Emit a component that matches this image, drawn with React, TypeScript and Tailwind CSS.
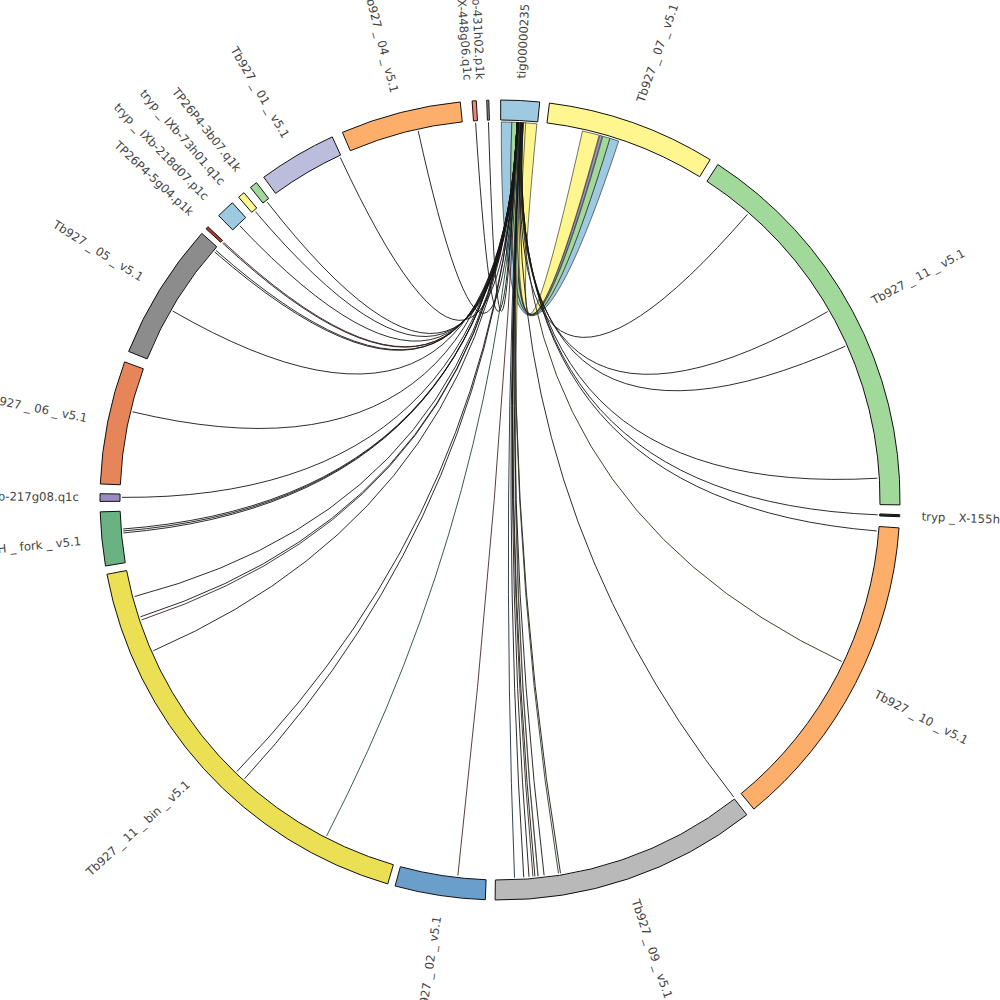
import React from 'react'

const CX = 500
const CY = 500
const R_OUT = 400
const R_IN = 380
const R_CHORD = 378

type Seg = { name: string; a0: number; a1: number; fill: string }
type Label = { text: string; a: number }

const segments: Seg[] = [
  { name: 'tig00000235', a0: 0.1, a1: 5.7, fill: '#9ecae1' },
  { name: 'Tb927_07_v5.1', a0: 7.1, a1: 31.7, fill: '#fff68f' },
  { name: 'Tb927_11_v5.1', a0: 33.0, a1: 90.7, fill: '#a1d99b' },
  { name: 'tryp_X-155h', a0: 92.1, a1: 92.4, fill: '#222222' },
  { name: 'Tb927_10_v5.1', a0: 94.0, a1: 140.6, fill: '#fdae6b' },
  { name: 'Tb927_09_v5.1', a0: 141.9, a1: 180.7, fill: '#b9b9b9' },
  { name: 'Tb927_02_v5.1', a0: 182.1, a1: 195.2, fill: '#6a9ecb' },
  { name: 'Tb927_11_bin_v5.1', a0: 196.3, a1: 259.3, fill: '#ebdf53' },
  { name: 'H_fork_v5.1', a0: 260.5, a1: 268.3, fill: '#6bb283' },
  { name: '217g08', a0: 269.8, a1: 270.9, fill: '#9b8bc4' },
  { name: 'Tb927_06_v5.1', a0: 272.3, a1: 290.2, fill: '#e6855a' },
  { name: 'Tb927_05_v5.1', a0: 291.8, a1: 311.8, fill: '#8c8c8c' },
  { name: 'TP26P4-5g04', a0: 312.7, a1: 313.1, fill: '#b23a2a' },
  { name: '218d07', a0: 315.3, a1: 318.0, fill: '#9ecae1' },
  { name: '73h01', a0: 319.2, a1: 320.2, fill: '#fff68f' },
  { name: 'TP26P4-3b07', a0: 321.4, a1: 322.5, fill: '#a1d99b' },
  { name: 'Tb927_01_v5.1', a0: 323.8, a1: 335.2, fill: '#bcbddc' },
  { name: 'Tb927_04_v5.1', a0: 336.8, a1: 354.3, fill: '#fdae6b' },
  { name: '431h02', a0: 356.0, a1: 356.6, fill: '#fb8072' },
  { name: '448g06', a0: 358.1, a1: 358.4, fill: '#999999' },
]

// right half: text reads outward from the circle
const rightLabels: Label[] = [
  { text: 'tig00000235', a: 2.9 },
  { text: 'Tb927 _ 07 _ v5.1', a: 19.4 },
  { text: 'Tb927 _ 11 _ v5.1', a: 61.9 },
  { text: 'tryp _ X-155h04.q1k', a: 92.25 },
  { text: 'Tb927 _ 10 _ v5.1', a: 117.3 },
  { text: 'Tb927 _ 09 _ v5.1', a: 161.3 },
]

// left half: text reads toward the circle
const leftLabels: Label[] = [
  { text: 'Tb927 _ 02 _ v5.1', a: 188.6 },
  { text: 'Tb927 _ 11 _ bin _ v5.1', a: 227.8 },
  { text: 'Tb927 _ VSG _ H _ fork _ v5.1', a: 264.4 },
  { text: 'tryp _ IXb-217g08.q1c', a: 270.4 },
  { text: 'Tb927 _ 06 _ v5.1', a: 281.2 },
  { text: 'Tb927 _ 05 _ v5.1', a: 301.8 },
  { text: 'TP26P4-5g04.p1k', a: 312.9 },
  { text: 'tryp _ IXb-218d07.p1c', a: 315.8 },
  { text: 'tryp _ IXb-73h01.q1c', a: 318.8 },
  { text: 'TP26P4-3b07.q1k', a: 321.6 },
  { text: 'Tb927 _ 01 _ v5.1', a: 329.5 },
  { text: 'Tb927 _ 04 _ v5.1', a: 345.5 },
  { text: 'tryp _ X-448g06.q1c', a: 355.6 },
  { text: 'tryp _ IXb-431h02.p1k', a: 357.3 },
]

const K = '#151515'

// [angle on tig00000235, angle on other segment, stroke]
const links: [number, number, string][] = [
  [3.3, 40.9, K],
  [3.35, 60.1, K],
  [3.4, 66.0, K],
  [3.45, 86.7, K],
  [3.5, 92.25, K],
  [3.5, 94.7, K],
  [3.3, 115.3, '#2a2a18'],
  [3.2, 141.8, K],
  [3.0, 170.8, K],
  [3.05, 171.1, '#2d3d22'],
  [3.1, 173.3, K],
  [3.0, 174.7, K],
  [3.1, 175.0, '#3a2a20'],
  [3.2, 175.6, K],
  [3.1, 176.4, K],
  [3.0, 177.8, '#1e2c3a'],
  [2.9, 186.4, '#4a2626'],
  [2.9, 207.3, '#244a32'],
  [2.8, 222.5, K],
  [2.8, 224.1, K],
  [2.8, 246.5, K],
  [2.8, 251.5, '#3a2424'],
  [2.8, 252.0, K],
  [2.8, 255.2, K],
  [2.7, 265.0, K],
  [2.7, 265.3, K],
  [2.7, 265.6, K],
  [2.7, 270.4, K],
  [2.7, 283.5, K],
  [2.6, 300.0, K],
  [2.6, 311.0, K],
  [2.6, 311.3, K],
  [2.6, 312.8, K],
  [2.6, 313.0, '#3a1a1a'],
  [2.6, 316.5, K],
  [2.6, 319.7, K],
  [2.6, 322.0, K],
  [2.6, 335.0, K],
  [2.6, 347.5, K],
  [2.6, 356.3, K],
  [2.6, 358.25, K],
]

// [tig start, tig end, other start, other end, fill]
const ribbons: [number, number, number, number, string][] = [
  [0.2, 1.8, 16.9, 18.3, '#9ecae1'],
  [1.8, 3.0, 15.8, 16.9, '#a1d99b'],
  [3.5, 5.6, 12.6, 15.2, '#fff68f'],
  [3.0, 3.3, 15.3, 15.7, '#9e9ac8'],
  [3.55, 3.9, 174.2, 174.25, '#fff68f'],
]

function pt(r: number, a: number) {
  const t = (a * Math.PI) / 180
  return [CX + r * Math.sin(t), CY - r * Math.cos(t)]
}

function f(p: number[]) {
  return `${p[0].toFixed(2)} ${p[1].toFixed(2)}`
}

function segPath(a0: number, a1: number) {
  const big = a1 - a0 > 180 ? 1 : 0
  return `M${f(pt(R_OUT, a0))} A${R_OUT} ${R_OUT} 0 ${big} 1 ${f(pt(R_OUT, a1))} L${f(pt(R_IN, a1))} A${R_IN} ${R_IN} 0 ${big} 0 ${f(pt(R_IN, a0))} Z`
}

function linkPath(a: number, b: number) {
  return `M${f(pt(R_CHORD, a))} Q${CX} ${CY} ${f(pt(R_CHORD, b))}`
}

function ribbonPath(s0: number, s1: number, t0: number, t1: number) {
  const r = R_CHORD
  return `M${f(pt(r, s0))} A${r} ${r} 0 0 1 ${f(pt(r, s1))} Q${CX} ${CY} ${f(pt(r, t0))} A${r} ${r} 0 0 1 ${f(pt(r, t1))} Q${CX} ${CY} ${f(pt(r, s0))} Z`
}

const ChordDiagram: React.FC = () => {
  return (
    <svg width={1000} height={1000} viewBox="0 0 1000 1000" className="block">
      {ribbons.map(([s0, s1, t0, t1, c], i) => (
        <path key={`r${i}`} d={ribbonPath(s0, s1, t0, t1)} fill={c} stroke="#1a1a1a" strokeWidth={0.6} />
      ))}
      {links.map(([a, b, c], i) => (
        <path key={`l${i}`} d={linkPath(a, b)} fill="none" stroke={c} strokeWidth={0.9} />
      ))}
      {segments.map((s) => (
        <path key={s.name} d={segPath(s.a0, s.a1)} fill={s.fill} stroke="#111" strokeWidth={1} />
      ))}
      <g fontFamily="'DejaVu Sans', Verdana, sans-serif" fontSize={11.7} fill="#444444">
        {rightLabels.map((l) => {
          const p = pt(422, l.a)
          return (
            <text
              key={l.text}
              transform={`translate(${p[0].toFixed(2)} ${p[1].toFixed(2)}) rotate(${(l.a - 90).toFixed(2)})`}
              dominantBaseline="central"
              textAnchor="start"
            >
              {l.text}
            </text>
          )
        })}
        {leftLabels.map((l) => {
          const p = pt(421, l.a)
          return (
            <text
              key={l.text}
              transform={`translate(${p[0].toFixed(2)} ${p[1].toFixed(2)}) rotate(${(l.a + 90 - 360).toFixed(2)})`}
              dominantBaseline="central"
              textAnchor="end"
            >
              {l.text}
            </text>
          )
        })}
      </g>
    </svg>
  )
}

export default function App() {
  return (
    <div className="w-[1000px] h-[1000px] overflow-hidden bg-white">
      <ChordDiagram />
    </div>
  )
}
